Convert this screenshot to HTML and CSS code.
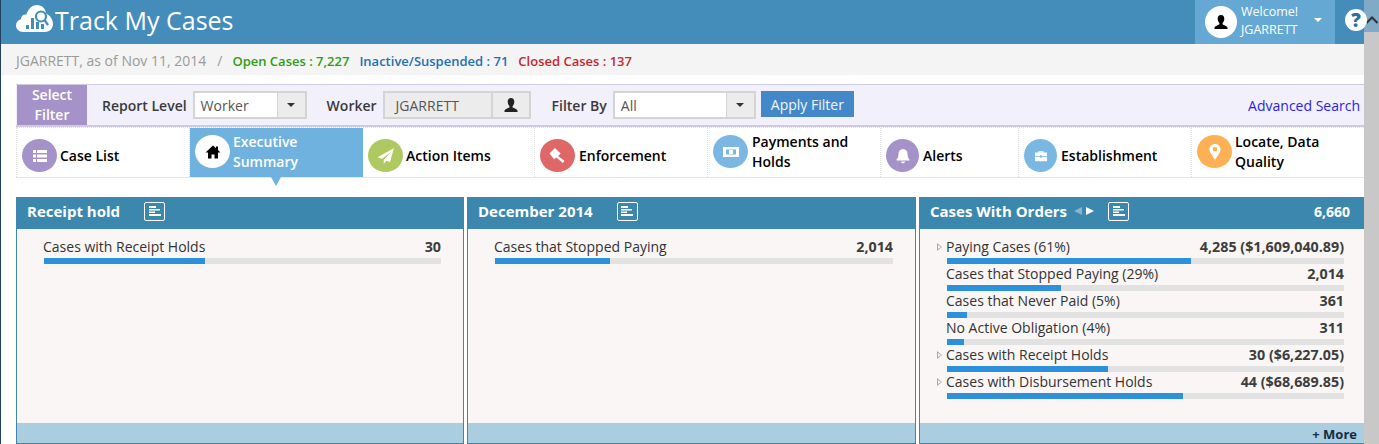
FILE: index.html
```html
<!DOCTYPE html>
<html lang="en">
<head>
<meta charset="utf-8">
<title>Track My Cases</title>
<link rel="stylesheet" href="styles.css">
</head>
<body>
<div class="page">
  <div class="main">
    <header class="topbar">
      <div class="brand">
        <svg class="logo" viewBox="0 0 37 27" width="37" height="27"><path fill="#fff" d="M7 27C3 27 0 24 0 20.500C0 17.500 2 15 5 14.300C5 11 7.500 9 10.500 9.500C12 4 16 0 21 0C26 0 29.500 3.500 30 8.500C34 10 37 14.500 37 19C37 24 33 27 29 27Z"/><path fill="#448cb9" d="M10 24h3v-4h-3zM15 24h3V13h-3zM20 24h3v-7h-3zM25 24h3v-5h-3z"/><circle cx="25" cy="11.500" r="5" fill="#fff" stroke="#448cb9" stroke-width="2.200"/><path stroke="#448cb9" stroke-width="2.200" d="M28.500 15l3.500 5"/></svg>
        <span class="brand-name">Track My Cases</span>
      </div>
      <div class="user">
        <span class="avatar"><svg viewBox="0 0 16 16" width="16" height="16"><path d="M8 1c2.200 0 3.300 1.700 3.300 3.700 0 1.800-.8 3.300-1.700 4.200v1.500c1.400.7 4.400 1.300 4.900 3.100v1.500H1.500V13.500c.5-1.800 3.500-2.400 4.900-3.100V8.900C5.500 8 4.700 6.500 4.700 4.700 4.700 2.700 5.800 1 8 1z"/></svg></span>
        <span class="welcome">Welcome!<br>JGARRETT</span>
        <span class="caret caret-white"></span>
      </div>
      <div class="help"><span class="help-mark">?</span></div>
    </header>

    <div class="statusbar">
      <span class="as-of">JGARRETT, as of Nov 11, 2014</span>
      <span class="slash">/</span>
      <span class="stat stat-open">Open Cases : 7,227</span>
      <span class="stat stat-inactive">Inactive/Suspended : 71</span>
      <span class="stat stat-closed">Closed Cases : 137</span>
    </div>

    <div class="content">
      <div class="filterbar">
        <div class="filter-tag">Select Filter</div>
        <label class="filter-label label-report">Report Level</label>
        <div class="combo combo-report"><span class="combo-value">Worker</span><span class="combo-btn"><span class="caret"></span></span></div>
        <label class="filter-label label-worker">Worker</label>
        <div class="combo combo-worker"><span class="combo-value">JGARRETT</span><span class="combo-btn combo-btn-user"><svg viewBox="0 0 16 16" width="16" height="16"><path fill="#222" d="M8 1c2.200 0 3.300 1.700 3.300 3.700 0 1.800-.8 3.300-1.700 4.200v1.500c1.400.7 4.400 1.300 4.900 3.100v1.500H1.500V13.500c.5-1.800 3.500-2.400 4.900-3.100V8.900C5.500 8 4.700 6.500 4.700 4.700 4.700 2.700 5.800 1 8 1z"/></svg></span></div>
        <label class="filter-label label-filter">Filter By</label>
        <div class="combo combo-filter"><span class="combo-value">All</span><span class="combo-btn"><span class="caret"></span></span></div>
        <button class="apply">Apply Filter</button>
        <a class="advanced">Advanced Search</a>
      </div>

      <nav class="tabs">
        <div class="tab"><span class="tab-icon c-purple"><svg viewBox="0 0 16 16" width="16" height="16"><path fill="#fff" d="M1 2h3v3H1zM5 2h10v3H5zM1 6.500h3v3H1zM5 6.500h10v3H5zM1 11h3v3H1zM5 11h10v3H5z"/></svg></span><span class="tab-label">Case List</span></div>
        <div class="tab tab-tall tab-active"><span class="tab-icon c-white"><svg viewBox="0 0 16 16" width="16" height="16"><path d="M8 1.500L0.500 8.500H3V14.500H6.500V10.500H9.500V14.500H13V8.500H15.500L13 6V2.500H11V4.200Z"/></svg></span><span class="tab-label">Executive Summary</span></div>
        <div class="tab"><span class="tab-icon c-green"><svg viewBox="0 0 16 16" width="18" height="18"><path fill="#fff" d="M15 1L0.500 9l4 1.500L13 4 6 11.500V15l2.500-3 3 1.500z"/></svg></span><span class="tab-label">Action Items</span></div>
        <div class="tab tab-wide"><span class="tab-icon c-red"><svg viewBox="0 0 16 16" width="17" height="17"><path fill="#fff" d="M5.500 1L11 6 8.500 8.500 14.500 13 13 15 7 9.800 4.800 11.500 0.500 6z"/></svg></span><span class="tab-label">Enforcement</span></div>
        <div class="tab tab-tall tab-wide"><span class="tab-icon c-blue"><svg viewBox="0 0 16 12" width="16" height="12"><path fill="#fff" fill-rule="evenodd" d="M0 1h16v10H0zM3 3.500v5h10v-5z"/><circle cx="8" cy="6" r="2.300" fill="#fff"/></svg></span><span class="tab-label">Payments and Holds</span></div>
        <div class="tab tab-wide"><span class="tab-icon tab-icon-sm c-purple"><svg viewBox="0 0 16 16" width="16" height="16"><path fill="#fff" d="M8 1c3 0 4.500 2.200 4.500 5 0 3 1 4.500 2 5.500v1H1.500v-1c1-1 2-2.500 2-5.500C3.500 3.200 5 1 8 1zM6 13.500h4c0 1-1 1.800-2 1.800s-2-.8-2-1.800z"/></svg></span><span class="tab-label">Alerts</span></div>
        <div class="tab tab-wide"><span class="tab-icon tab-icon-sm c-blue"><svg viewBox="0 0 16 14" width="14" height="12"><path fill="#fff" d="M5 3V1.500h6V3h4v4H9V6H7v1H1V3zM6.200 3h3.600V2.600H6.200zM1 8h6v1h2V8h6v5H1z"/></svg></span><span class="tab-label">Establishment</span></div>
        <div class="tab tab-tall"><span class="tab-icon c-orange"><svg viewBox="0 0 16 18" width="16" height="18"><path fill="#fff" fill-rule="evenodd" d="M8 1c3.300 0 5.500 2.400 5.500 5.300 0 3.500-3.500 7-5.500 10.500C6 13.300 2.500 9.800 2.500 6.300 2.500 3.400 4.700 1 8 1zM8 4a2.300 2.300 0 1 0 0 4.600A2.300 2.300 0 0 0 8 4z"/></svg></span><span class="tab-label">Locate, Data Quality</span></div>
      </nav>

      <section class="panels">
        <article class="panel">
          <div class="panel-head"><span class="panel-title">Receipt hold</span><span class="list-btn"><svg viewBox="0 0 14 12" width="14" height="12"><path fill="#fff" d="M1 1h7v2H1zM1 4h11v1.500H1zM1 6.500h6V8H1zM1 9h12v2H1z"/></svg></span></div>
          <div class="panel-body">
            <div class="row"><div class="row-line"><span class="row-name">Cases with Receipt Holds</span><span class="row-val">30</span></div><div class="bar"><div class="fill" style="width:40.500%"></div></div></div>
          </div>
          <div class="panel-foot"></div>
        </article>
        <article class="panel">
          <div class="panel-head"><span class="panel-title">December 2014</span><span class="list-btn"><svg viewBox="0 0 14 12" width="14" height="12"><path fill="#fff" d="M1 1h7v2H1zM1 4h11v1.500H1zM1 6.500h6V8H1zM1 9h12v2H1z"/></svg></span></div>
          <div class="panel-body">
            <div class="row"><div class="row-line"><span class="row-name">Cases that Stopped Paying</span><span class="row-val">2,014</span></div><div class="bar"><div class="fill" style="width:29%"></div></div></div>
          </div>
          <div class="panel-foot"></div>
        </article>
        <article class="panel panel-c">
          <div class="panel-head"><span class="panel-title">Cases With Orders</span><span class="pager"><i class="arrow-l"></i><i class="arrow-r"></i></span><span class="list-btn"><svg viewBox="0 0 14 12" width="14" height="12"><path fill="#fff" d="M1 1h7v2H1zM1 4h11v1.500H1zM1 6.500h6V8H1zM1 9h12v2H1z"/></svg></span><span class="panel-total">6,660</span></div>
          <div class="panel-body">
            <div class="row row-exp"><div class="row-line"><span class="row-name">Paying Cases (61%)</span><span class="row-val">4,285 ($1,609,040.89)</span></div><div class="bar"><div class="fill" style="width:61.500%"></div></div></div>
            <div class="row"><div class="row-line"><span class="row-name">Cases that Stopped Paying (29%)</span><span class="row-val">2,014</span></div><div class="bar"><div class="fill" style="width:28.700%"></div></div></div>
            <div class="row"><div class="row-line"><span class="row-name">Cases that Never Paid (5%)</span><span class="row-val">361</span></div><div class="bar"><div class="fill" style="width:5%"></div></div></div>
            <div class="row"><div class="row-line"><span class="row-name">No Active Obligation (4%)</span><span class="row-val">311</span></div><div class="bar"><div class="fill" style="width:4.300%"></div></div></div>
            <div class="row row-exp"><div class="row-line"><span class="row-name">Cases with Receipt Holds</span><span class="row-val">30 ($6,227.05)</span></div><div class="bar"><div class="fill" style="width:40.500%"></div></div></div>
            <div class="row row-exp"><div class="row-line"><span class="row-name">Cases with Disbursement Holds</span><span class="row-val">44 ($68,689.85)</span></div><div class="bar"><div class="fill" style="width:59.500%"></div></div></div>
          </div>
          <div class="panel-foot"><span class="more">+ More</span></div>
        </article>
      </section>
    </div>
  </div>
  <aside class="scrollbar"><div class="scroll-up"><svg viewBox="0 0 14 8" width="14" height="8"><path fill="none" stroke="#333" stroke-width="2" d="M1.500 7L7 1.500 12.500 7"/></svg></div></aside>
</div>
</body>
</html>
```
FILE: styles.css
```css
* { box-sizing: border-box; }
html, body { margin: 0; height: 100%; overflow: hidden; }
body { font-family: "Open Sans", "Liberation Sans", sans-serif; font-size: 14px; color: #333; background: #fff; }
.page { display: flex; height: 444px; border-left: 1px solid #22405f; }
.main { flex: 1; min-width: 0; display: flex; flex-direction: column; }

.topbar { display: flex; height: 44px; background: #448cb9; color: #fff; align-items: stretch; flex: none; }
.brand { display: flex; align-items: center; flex: 1; padding-left: 15px; gap: 2px; }
.logo { display: block; margin-top: -7px; }
.brand-name { font-size: 25px; line-height: 40px; margin-top: -4px; }
.user { width: 140px; background: #64a8d3; display: flex; align-items: center; padding-left: 10px; font-size: 12.500px; }
.avatar { width: 32px; height: 32px; border-radius: 50%; background: #fff; display: flex; align-items: center; justify-content: center; flex: none; }
.welcome { margin-left: 4px; line-height: 18px; margin-top: -2px; width: 72px; flex: none; }
.caret { display: block; width: 0; height: 0; border-left: 4px solid transparent; border-right: 4px solid transparent; border-top: 4px solid #333; }
.caret-white { border-top-color: #fff; margin-left: 1px; margin-top: -5px; }
.help { width: 29px; position: relative; }
.help-mark { position: absolute; left: 10px; top: 9px; width: 22px; height: 22px; border-radius: 50%; background: #fff; color: #2f7099; font-weight: 800; font-size: 19px; line-height: 22px; text-align: center; }

.statusbar { height: 31px; background: #f4f4f4; flex: none; display: flex; align-items: center; padding: 2px 0 0 15px; font-size: 14px; }
.as-of { color: #9a9a9a; }
.slash { color: #999; margin: 0 10px 0 11px; }
.stat { font-size: 13px; font-weight: 600; margin-right: 10px; }
.stat-open { color: #2e9e12; }
.stat-inactive { color: #1d6fb5; }
.stat-closed { color: #c9262b; }

.content { padding: 9px 0 0 15px; flex: 1; min-height: 0; display: flex; flex-direction: column; }

.filterbar { height: 43px; flex: none; background: #f2f0fb; border-top: 1px solid #cfc9e3; border-bottom: 2px solid #cfc9e3; display: flex; align-items: center; }
.filter-tag { width: 70px; height: 40px; background: #a592c9; color: #fff; font-weight: 600; font-size: 14px; line-height: 20px; text-align: center; padding: 0 10px; margin-left: 1px; flex: none; }
.filter-label { font-weight: 600; font-size: 14px; color: #3a3a3a; white-space: nowrap; }
.label-report { margin-left: 15px; }
.label-worker { margin-left: 20px; }
.label-filter { margin-left: 21px; }
.combo { display: flex; height: 28px; border: 2px solid #d4d4d4; background: #fff; margin-left: 6px; flex: none; }
.combo-report { width: 114px; }
.combo-worker { width: 148px; background: #ececec; }
.combo-filter { width: 143px; }
.combo-value { flex: 1; font-size: 14px; color: #555; padding-left: 6px; line-height: 25px; }
.combo-worker .combo-value { padding-left: 11px; }
.combo-btn { width: 28px; background: #ececec; border-left: 1px solid #d4d4d4; display: flex; align-items: center; justify-content: center; flex: none; }
.combo-btn-user { width: 38px; border-left-width: 2px; }
.apply { margin-left: 5px; width: 93px; height: 26px; border: 0; background: #4388c8; color: #f2f6fb; font-family: inherit; font-size: 14px; padding: 0; margin-top: -2px; flex: none; }
.advanced { margin-left: auto; margin-right: 4px; color: #2a22e8; font-size: 14px; }

.tabs { display: grid; grid-template-columns: 174fr 173fr 172fr 173fr 173fr 138fr 173fr 172fr; height: 51px; flex: none; border-top: 1px dotted #ddd; border-bottom: 1px solid #e6e6e6; }
.tab { display: flex; align-items: center; padding: 6px 0 0 5px; gap: 3px; border-right: 1px dotted #ddd; color: #000; font-size: 14px; font-weight: 600; line-height: 20px; position: relative; min-width: 0; }
.tab:first-child { border-left: 1px dotted #ddd; }
.tab:last-child { border-right: 0; }
.tab-tall { padding: 0 0 2px 5px; }
.tab-wide { gap: 4px; }
.tab-icon { width: 35px; height: 33px; border-radius: 50%; flex: none; display: flex; align-items: center; justify-content: center; }
.tab-icon-sm { width: 33px; }
.tab-active { background: #6fb2e0; color: #fff; border-right-color: #6fb2e0; }
.tab-active::after { content: ""; position: absolute; left: 81px; bottom: -9px; border-left: 5px solid transparent; border-right: 5px solid transparent; border-top: 9px solid #6fb2e0; }
.c-purple { background: #a592c9; }
.c-white { background: #fff; }
.c-green { background: #aec95f; }
.c-red { background: #e06767; }
.c-blue { background: #7ab8e3; }
.c-orange { background: #fdb154; }

.panels { display: grid; grid-template-columns: 448fr 449fr 445fr; gap: 3px; margin-top: 19px; flex: 1; min-height: 0; }
.panel { min-width: 0; display: flex; flex-direction: column; border: 1px solid #3c87ac; border-top: 0; }
.panel-c { border-right: 0; }
.panel-head { height: 32px; margin: 0 -1px; background: #3c87ad; color: #fff; display: flex; align-items: center; padding: 0 14px 4px 11px; flex: none; }
.panel-c .panel-head { margin-right: 0; }
.panel-title { font-size: 15px; font-weight: 700; }
.list-btn { width: 21px; height: 19px; border: 1px solid #fff; border-radius: 2px; margin-left: 24px; display: flex; align-items: center; justify-content: center; flex: none; }
.pager { display: flex; align-items: center; gap: 4px; margin-left: 7px; }
.pager + .list-btn { margin-left: 14px; }
.arrow-l { border-top: 4.500px solid transparent; border-bottom: 4.500px solid transparent; border-right: 8px solid #8bb4cd; }
.arrow-r { border-top: 4.500px solid transparent; border-bottom: 4.500px solid transparent; border-left: 8px solid #fff; }
.panel-total { margin-left: auto; font-size: 14px; font-weight: 700; }
.panel-body { flex: 1; background: #faf6f5; padding: 8px 22px 0 27px; min-height: 0; }
.panel-c .panel-body { padding-right: 20px; }
.panel-foot { height: 20px; background: #abcde0; flex: none; text-align: right; padding-right: 7px; }
.more { font-size: 13px; font-weight: 700; color: #142c45; line-height: 22px; display: block; }
.row { height: 27px; position: relative; }
.row-line { display: flex; justify-content: space-between; align-items: baseline; height: 21px; line-height: 20px; }
.row-name { font-size: 14px; color: #333; margin-left: -1px; }
.row-val { font-size: 14.300px; font-weight: 700; color: #3d3d3d; }
.bar { height: 6px; background: #e2e2e2; }
.fill { height: 6px; background: #2d90da; }
.row-exp::before { content: ""; position: absolute; left: -10px; top: 6px; border-top: 4.500px solid transparent; border-bottom: 4.500px solid transparent; border-left: 5px solid #aaa; }
.row-exp::after { content: ""; position: absolute; left: -9px; top: 8px; border-top: 2.500px solid transparent; border-bottom: 2.500px solid transparent; border-left: 3px solid #faf6f5; }

.scrollbar { width: 15px; flex: none; background: #c8c8c8; }
.scroll-up { height: 32px; background: #7fabc6; display: flex; align-items: center; justify-content: center; padding-top: 8px; }
```
